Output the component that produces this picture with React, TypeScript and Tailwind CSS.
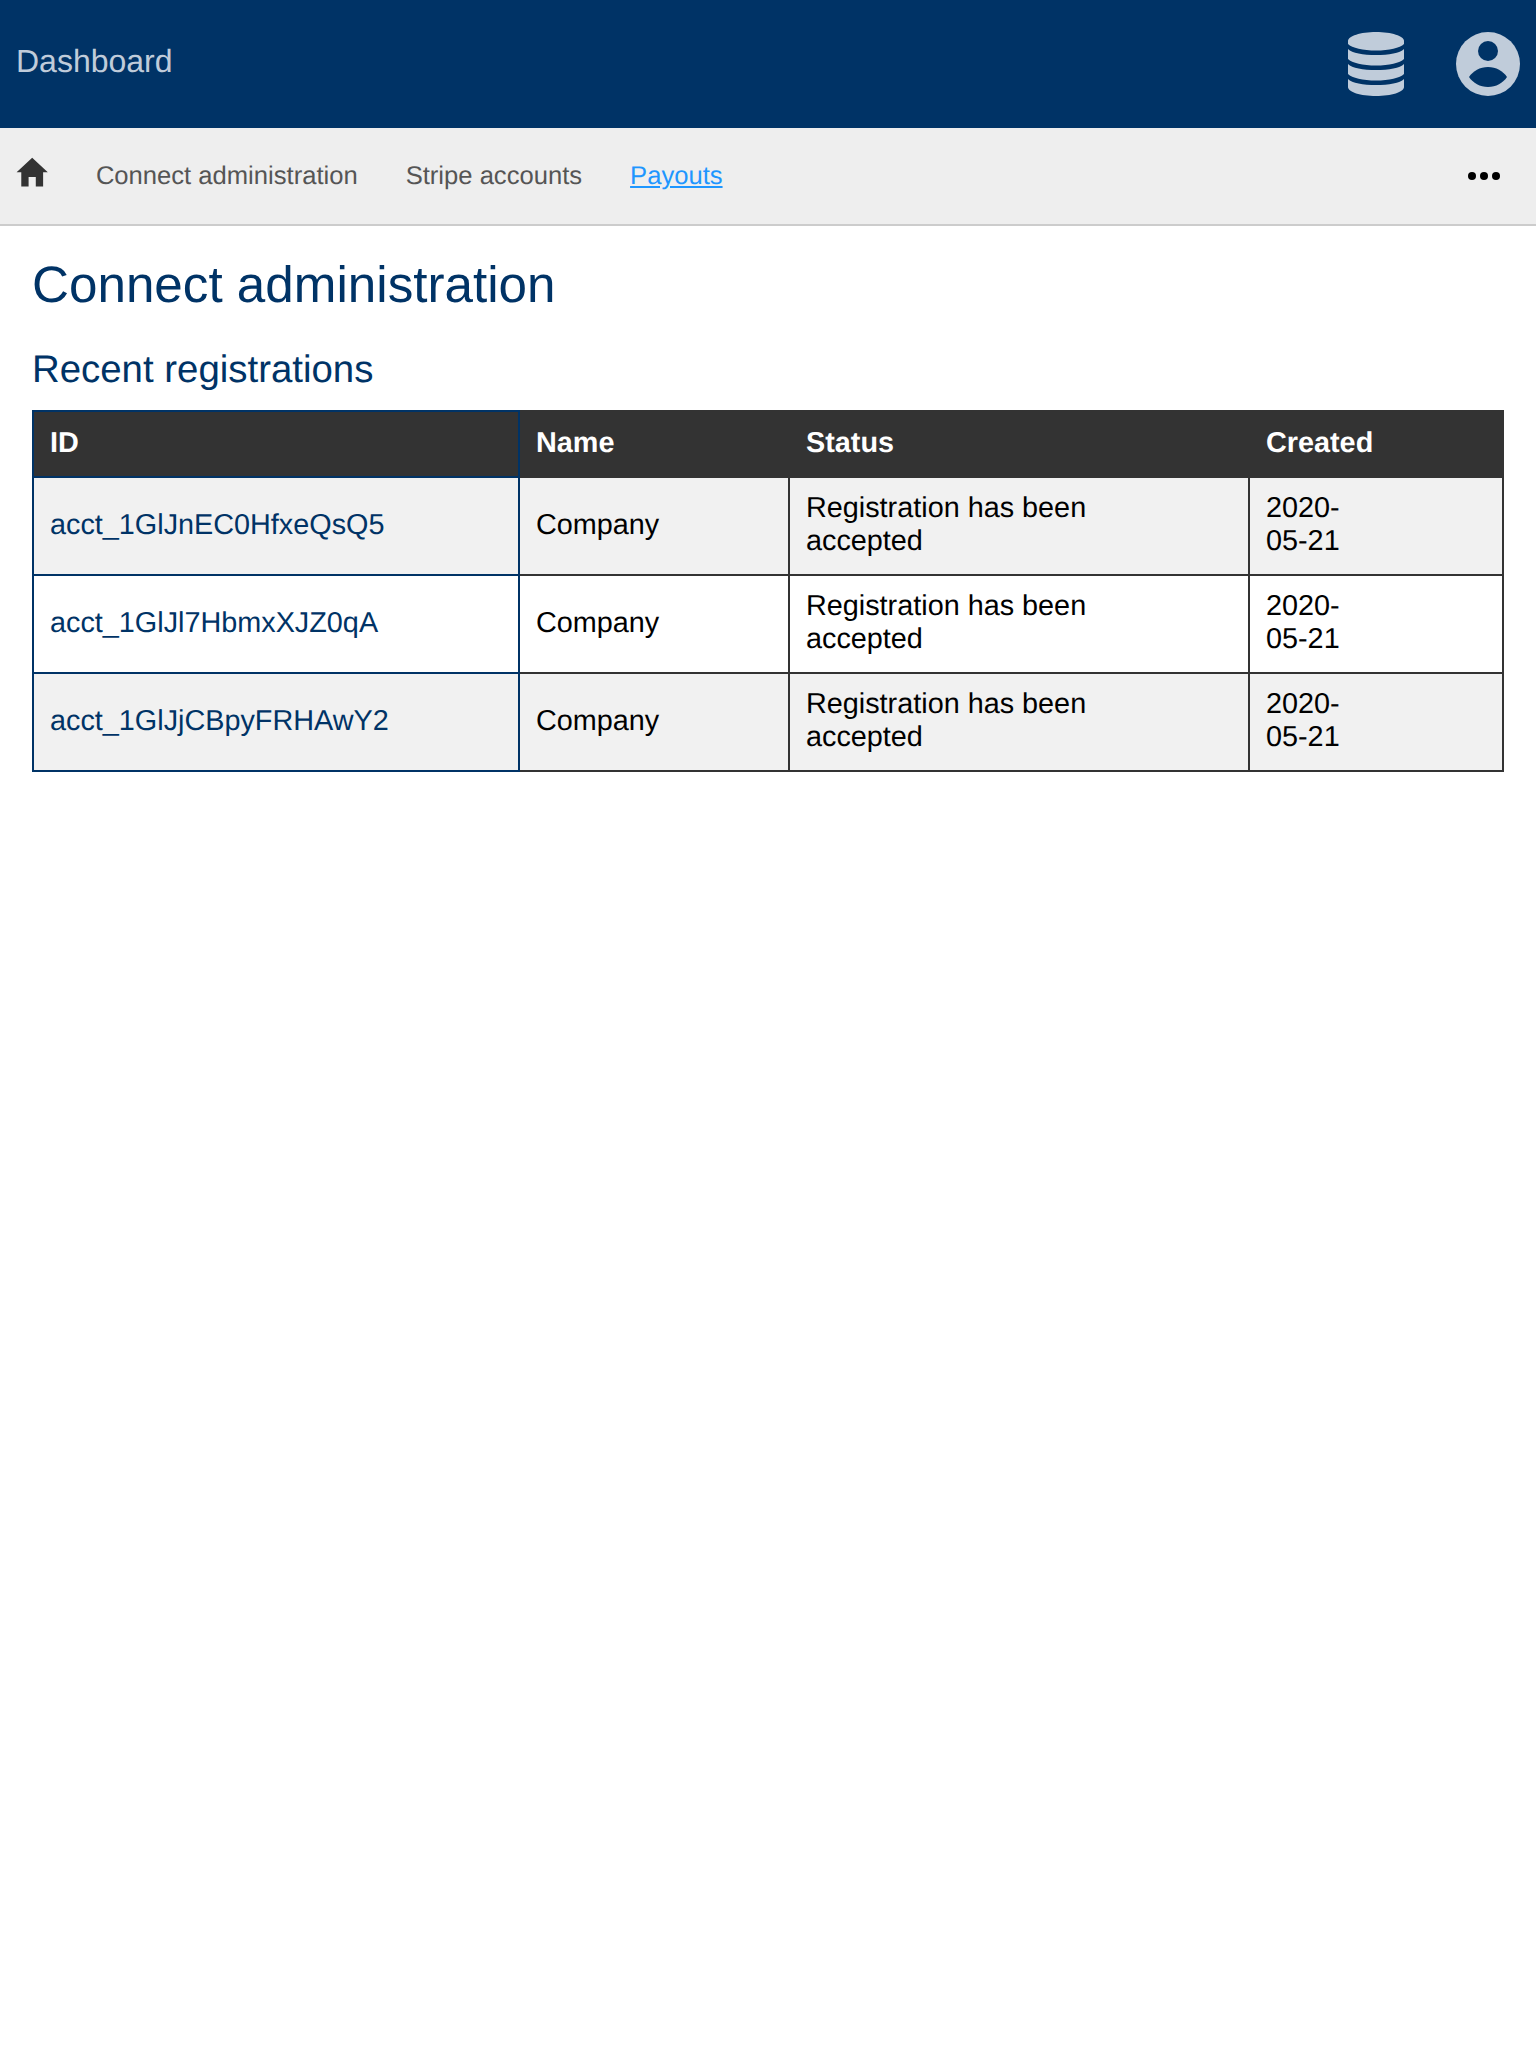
import { IoMdHome } from "react-icons/io";

const rows = [
  { id: "acct_1GlJnEC0HfxeQsQ5", shaded: true },
  { id: "acct_1GlJl7HbmxXJZ0qA", shaded: false },
  { id: "acct_1GlJjCBpyFRHAwY2", shaded: true },
];

function DatabaseIcon() {
  return (
    <svg width="56" height="64" viewBox="0 0 56 64" className="text-[#c0ccda]" fill="currentColor">
      <path d="M0 9c0-5 12.500-9 28-9s28 4 28 9v3c-4 4-15 6.500-28 6.500S4 16 0 12z" />
      <path d="M0 17c4 4 15 6 28 6s24-2 28-6v10c-4 4-15 6.500-28 6.500S4 31 0 27z" />
      <path d="M0 32c4 4 15 6 28 6s24-2 28-6v10c-4 4-15 6.500-28 6.500S4 46 0 42z" />
      <path d="M0 47c4 4 15 6 28 6s24-2 28-6v8c0 5-12.500 9-28 9S0 60 0 55z" />
    </svg>
  );
}

function UserIcon() {
  return (
    <svg width="64" height="64" viewBox="0 0 64 64">
      <circle cx="32" cy="32" r="32" fill="#c0ccda" />
      <circle cx="32" cy="19" r="10" fill="#003366" />
      <path d="M13 45c4-6 11-10 19-10s15 4 19 10c-4 6-11 10-19 10s-15-4-19-10z" fill="#003366" />
    </svg>
  );
}

export default function App() {
  return (
    <div className="min-h-screen bg-white font-['Liberation_Sans',Arial,sans-serif] [text-rendering:geometricPrecision]">
      <header className="h-[128px] bg-[#003366] flex items-center justify-between pl-4 pr-4">
        <span className="text-[32px] text-[#c0ccda] -mt-[6px]">Dashboard</span>
        <div className="flex items-center gap-[52px]">
          <DatabaseIcon />
          <UserIcon />
        </div>
      </header>

      <nav className="h-[98px] bg-[#eeeeee] border-b-2 border-[#cccccc] flex items-center pl-[13px] pr-[36px] text-[25.6px] text-[#555555]">
        <IoMdHome className="w-[38.4px] h-[38.4px] text-[#333333] -mt-[7px]" />
        <a className="ml-[44.5px] cursor-pointer">Connect administration</a>
        <a className="ml-12 cursor-pointer">Stripe accounts</a>
        <a className="ml-12 text-[#1e96ff] underline cursor-pointer">Payouts</a>
        <div className="ml-auto flex gap-1">
          <span className="w-2 h-2 rounded-full bg-black" />
          <span className="w-2 h-2 rounded-full bg-black" />
          <span className="w-2 h-2 rounded-full bg-black" />
        </div>
      </nav>

      <main className="px-8">
        <h1 className="text-[51.2px] leading-[59px] text-[#003366] mt-[29px]">Connect administration</h1>
        <h2 className="text-[38.4px] leading-[44px] text-[#003366] mt-[34px] mb-[18px]">Recent registrations</h2>

        <table className="w-[1472px] table-fixed border-collapse text-[28.8px] leading-[32.6px] text-black">
          <thead>
            <tr className="bg-[#333333] text-white text-left">
              <th className="w-[486px] h-[66px] px-4 pb-[2px] border-2 border-[#003366] font-bold">ID</th>
              <th className="w-[270px] px-4 pb-[2px] border-2 border-[#333333] font-bold">Name</th>
              <th className="w-[460px] px-4 pb-[2px] border-2 border-[#333333] font-bold">Status</th>
              <th className="px-4 pb-[2px] border-2 border-[#333333] font-bold">Created</th>
            </tr>
          </thead>
          <tbody>
            {rows.map((row) => (
              <tr key={row.id} className={row.shaded ? "bg-[#f1f1f1]" : "bg-white"}>
                <td className="h-[98px] px-4 pb-[2px] border-2 border-[#003366] text-[#003366]">
                  <a className="cursor-pointer">{row.id}</a>
                </td>
                <td className="px-4 pb-[2px] border-2 border-[#333333]">Company</td>
                <td className="px-4 pb-[2px] border-2 border-[#333333]">
                  <div className="w-[320px]">Registration has been accepted</div>
                </td>
                <td className="px-4 pb-[2px] border-2 border-[#333333]">
                  <div className="w-[90px]">2020-05-21</div>
                </td>
              </tr>
            ))}
          </tbody>
        </table>
      </main>
    </div>
  );
}
